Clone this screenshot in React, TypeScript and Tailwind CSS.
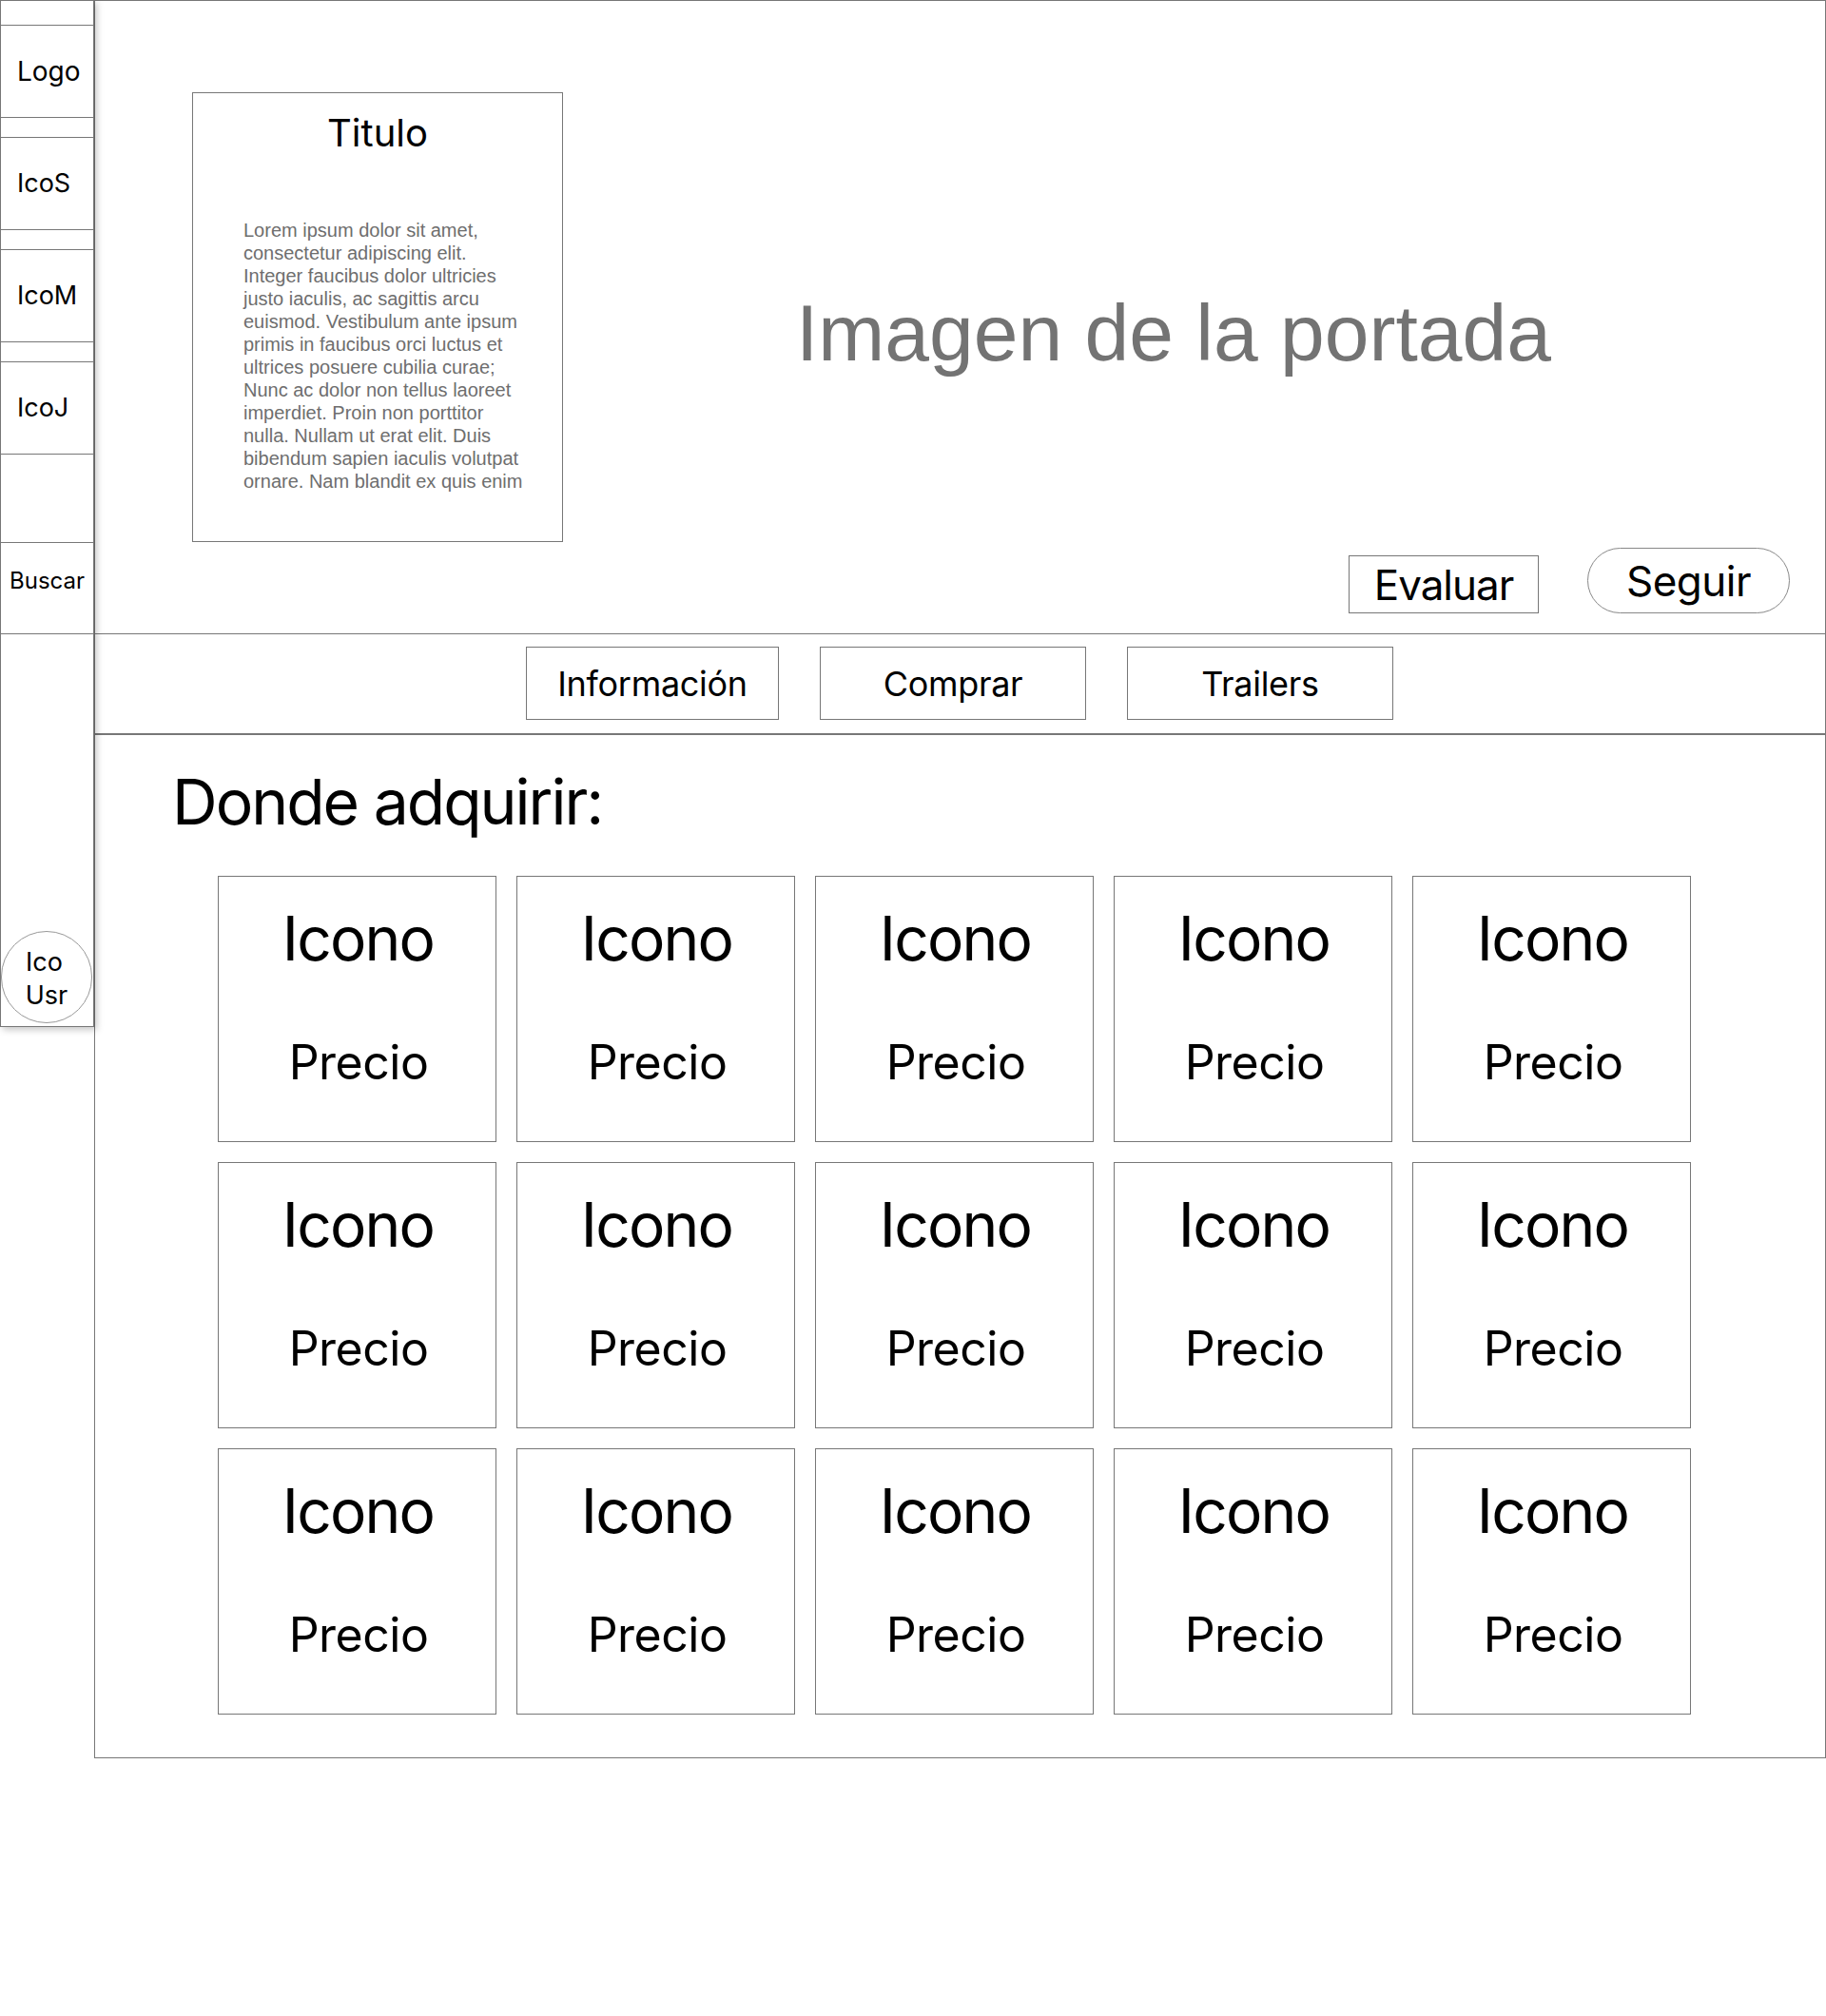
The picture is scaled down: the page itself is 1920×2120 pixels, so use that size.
import React from "react";

const sans = "font-['Inter','Liberation_Sans',Arial,sans-serif]";
const helv = "font-['Liberation_Sans',Arial,sans-serif]";

const lorem = [
  "Lorem ipsum dolor sit amet,",
  "consectetur adipiscing elit.",
  "Integer faucibus dolor ultricies",
  "justo iaculis, ac sagittis arcu",
  "euismod. Vestibulum ante ipsum",
  "primis in faucibus orci luctus et",
  "ultrices posuere cubilia curae;",
  "Nunc ac dolor non tellus laoreet",
  "imperdiet. Proin non porttitor",
  "nulla. Nullam ut erat elit. Duis",
  "bibendum sapien iaculis volutpat",
  "ornare. Nam blandit ex quis enim",
];

function Sidebar() {
  return (
    <aside className={`relative z-10 flex h-[1080px] w-[99px] shrink-0 flex-col border border-[#777] bg-white text-black shadow-[3px_3px_7px_rgba(0,0,0,0.22)] ${sans}`}>
      <div className="h-[26px] border-b border-[#777]" />
      <div className="flex h-[97px] items-center border-b border-[#777] pl-[17px] text-[28px]">Logo</div>
      <div className="h-[21px] border-b border-[#777]" />
      <div className="flex h-[97px] items-center border-b border-[#777] pl-[17px] text-[27px]">IcoS</div>
      <div className="h-[21px] border-b border-[#777]" />
      <div className="flex h-[97px] items-center border-b border-[#777] pl-[17px] text-[27px]">IcoM</div>
      <div className="h-[21px] border-b border-[#777]" />
      <div className="flex h-[97px] items-center border-b border-[#777] pl-[17px] text-[27px]">IcoJ</div>
      <div className="h-[93px] border-b border-[#777]" />
      <div className="flex h-[96px] items-center justify-center border-b border-[#777] pb-[16px] text-[24px]">Buscar</div>
      <div className="flex flex-1 flex-col justify-end pb-[3px]">
        <div className="flex h-[97px] w-[96px] flex-col items-center justify-center rounded-full border border-[#999] pt-[2px] text-[27px] leading-[35px]">
          <span className="-ml-[5px]">Ico</span>
          <span>Usr</span>
        </div>
      </div>
    </aside>
  );
}

function Header() {
  return (
    <header className="flex h-[666px] border-b border-[#777]">
      <div className="pl-[102px] pt-[96px]">
        <div className="h-[473px] w-[390px] border border-[#777] pt-[22px]">
          <h1 className={`text-center text-[40px] leading-[40px] text-black ${sans}`}>Titulo</h1>
          <div className={`mt-[70px] pl-[53px] text-[20px] leading-[24px] text-[#6e6e6e] ${helv}`}>
            {lorem.map((l) => (
              <div key={l} className="whitespace-nowrap">{l}</div>
            ))}
          </div>
        </div>
      </div>
      <div className="flex flex-1 flex-col">
        <div className={`pl-[245px] pt-[307px] text-[84px] leading-[84px] whitespace-nowrap text-[#737373] ${helv}`}>
          Imagen de la portada
        </div>
        <div className={`mt-auto flex items-end justify-end gap-[51px] pb-[21px] pr-[37px] text-black ${sans}`}>
          <button className="flex h-[61px] w-[200px] items-center justify-center border border-[#777] text-[44px] tracking-[-1px]">
            Evaluar
          </button>
          <button className="flex h-[69px] w-[213px] items-center justify-center rounded-full border border-[#888] text-[44px] tracking-[-0.5px]">
            Seguir
          </button>
        </div>
      </div>
    </header>
  );
}

function Tabs() {
  const tabs = [
    { label: "Información", w: "w-[266px]" },
    { label: "Comprar", w: "w-[280px]" },
    { label: "Trailers", w: "w-[280px]" },
  ];
  return (
    <nav className={`flex h-[106px] gap-[43px] border-b-2 border-[#777] pl-[453px] pt-[13px] text-black ${sans}`}>
      {tabs.map((t) => (
        <button key={t.label} className={`flex h-[77px] ${t.w} items-center justify-center border border-[#777] text-[36px] tracking-[-0.3px]`}>
          {t.label}
        </button>
      ))}
    </nav>
  );
}

function Card() {
  return (
    <div className={`flex h-[280px] w-[293px] flex-col items-center border border-[#777] pt-[33px] text-black ${sans}`}>
      <div className="pl-[2px] text-[64px] leading-[64px] tracking-[-1.8px]">Icono</div>
      <div className="mt-[72px] pl-[3px] text-[50px] leading-[52px] tracking-[-0.5px]">Precio</div>
    </div>
  );
}

export default function App() {
  return (
    <div className="flex min-h-[2120px] w-[1920px] items-start bg-white">
      <Sidebar />
      <main className="flex h-[1849px] flex-1 flex-col border border-[#777]">
        <Header />
        <Tabs />
        <section className="flex-1">
          <h2 className={`pl-[81px] pt-[37px] text-[66px] leading-[66px] tracking-[-2px] text-black ${sans}`}>
            Donde adquirir:
          </h2>
          <div className="mt-[45px] grid grid-cols-[repeat(5,293px)] gap-[21px] pl-[129px]">
            {Array.from({ length: 15 }).map((_, i) => (
              <Card key={i} />
            ))}
          </div>
        </section>
      </main>
    </div>
  );
}
